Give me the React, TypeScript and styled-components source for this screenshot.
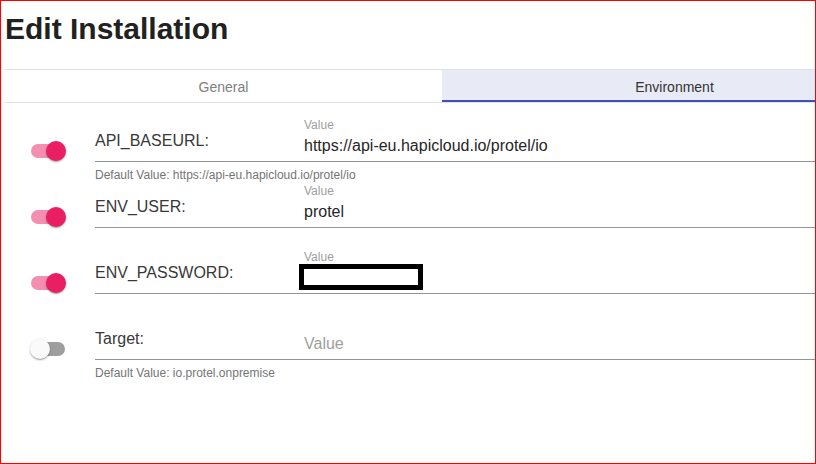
import * as React from 'react';
import styled, { createGlobalStyle } from 'styled-components';

interface IEnvVar {
  name: string,
  enabled: boolean,
  value?: string,
  secret?: boolean,
  defaultValue?: string,
}

const GlobalStyle = createGlobalStyle`
  html, body {
    margin: 0;
    padding: 0;
    background: #fff;
  }
  body {
    font-family: "Liberation Sans", Arial, sans-serif;
  }
`;

const Frame = styled.div`
  width: 816px;
  height: 464px;
  box-sizing: border-box;
  border: 1px solid #ff0000;
  padding: 10px 0 0 4px;
  overflow: hidden;
  background: #fff;
`;

const Title = styled.h1`
  margin: 0;
  font-size: 30px;
  line-height: 36px;
  font-weight: bold;
  color: #212121;
`;

const TabBar = styled.div`
  margin-top: 22px;
  display: grid;
  grid-template-columns: 437px 465px;
  border-top: 1px solid #e0e0e0;
  border-bottom: 1px solid #e0e0e0;
  overflow: hidden;
`;

const Tab = styled.div<{ $active?: boolean }>`
  height: 32px;
  box-sizing: border-box;
  padding-top: 4px;
  display: flex;
  align-items: center;
  justify-content: center;
  font-size: 14px;
  color: ${p => p.$active ? '#333' : '#808080'};
  background: ${p => p.$active ? '#e8eaf6' : 'transparent'};
  border-bottom: 2px solid ${p => p.$active ? '#3f51b5' : 'transparent'};
`;

const Rows = styled.div`
  padding-top: 15px;
`;

const Row = styled.div`
  display: grid;
  grid-template-columns: 90px 1fr;
  height: 66px;
`;

const SwitchCell = styled.div`
  height: 44px;
  box-sizing: border-box;
  padding: 23px 0 0 25px;
`;

const Switch = styled.div`
  position: relative;
  width: 36px;
  height: 20px;
`;

const Track = styled.div<{ $on: boolean }>`
  position: absolute;
  left: 1px;
  top: 3px;
  width: 34px;
  height: 14px;
  border-radius: 7px;
  background: ${p => p.$on ? '#f48fb1' : '#9e9e9e'};
`;

const Knob = styled.div<{ $on: boolean }>`
  position: absolute;
  top: 0;
  left: ${p => p.$on ? '16px' : '0'};
  width: 20px;
  height: 20px;
  border-radius: 50%;
  background: ${p => p.$on ? '#e91e63' : '#fafafa'};
  box-shadow: 0 1px 3px rgba(0, 0, 0, 0.2), 0 1px 1px rgba(0, 0, 0, 0.14), 0 2px 1px -1px rgba(0, 0, 0, 0.12);
`;

const Field = styled.div`
  display: grid;
  grid-template-columns: 209px 1fr;
  height: 44px;
  box-sizing: border-box;
  border-bottom: 1px solid #949494;
`;

const Name = styled.div`
  align-self: center;
  padding-top: 1px;
  font-size: 16px;
  line-height: 19px;
  color: #383838;
`;

const InputArea = styled.div`
  display: flex;
  flex-direction: column;
`;

const SmallLabel = styled.div`
  height: 14px;
  font-size: 12px;
  line-height: 14px;
  color: #9e9e9e;
`;

const InputText = styled.div<{ $placeholder?: boolean }>`
  margin-top: 4px;
  font-size: 16px;
  line-height: 19px;
  color: ${p => p.$placeholder ? '#9e9e9e' : '#262626'};
`;

const Redacted = styled.div`
  width: 124px;
  height: 26px;
  box-sizing: border-box;
  border: 5px solid #000;
  background: #fff;
  margin: -4px 0 -3px -5px;
`;

const Helper = styled.div`
  margin-top: 6px;
  font-size: 12px;
  line-height: 14px;
  color: #757575;
`;

const vars: IEnvVar[] = [
  { name: 'API_BASEURL:', enabled: true, value: 'https://api-eu.hapicloud.io/protel/io', defaultValue: 'https://api-eu.hapicloud.io/protel/io' },
  { name: 'ENV_USER:', enabled: true, value: 'protel' },
  { name: 'ENV_PASSWORD:', enabled: true, secret: true },
  { name: 'Target:', enabled: false, defaultValue: 'io.protel.onpremise' },
];

const EnvRow = ({ v }: { v: IEnvVar }) => {
  const hasValue = v.enabled;
  return <Row>
    <SwitchCell>
      <Switch>
        <Track $on={v.enabled} />
        <Knob $on={v.enabled} />
      </Switch>
    </SwitchCell>
    <div>
      <Field>
        <Name>{v.name}</Name>
        <InputArea>
          <SmallLabel>{hasValue ? 'Value' : ''}</SmallLabel>
          { v.secret
            ? <InputText><Redacted /></InputText>
            : <InputText $placeholder={!hasValue}>{hasValue ? v.value : 'Value'}</InputText> }
        </InputArea>
      </Field>
      { v.defaultValue && <Helper>Default Value: {v.defaultValue}</Helper> }
    </div>
  </Row>;
};

export default function App() {
  return <>
    <GlobalStyle />
    <Frame>
      <Title>Edit Installation</Title>
      <TabBar>
        <Tab>General</Tab>
        <Tab $active>Environment</Tab>
      </TabBar>
      <Rows>
        { vars.map(v => <EnvRow key={v.name} v={v} />) }
      </Rows>
    </Frame>
  </>;
}
